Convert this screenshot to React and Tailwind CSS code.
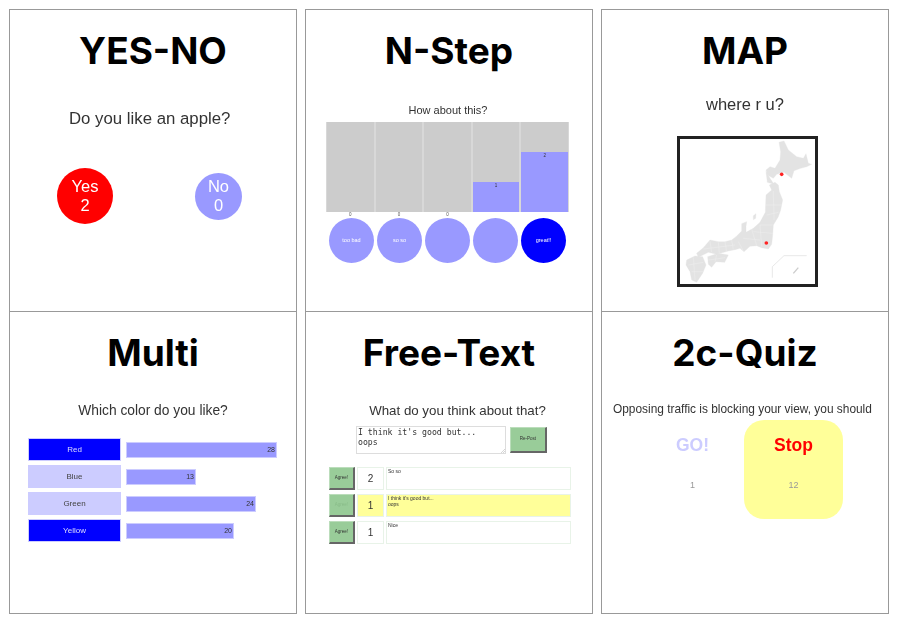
const titleFont = { fontFamily: 'Inter, "Noto Sans", sans-serif' };

function Card({ title, children }) {
  return (
    <div className="relative h-[303px] border border-[#999] flex flex-col">
      <h2 className="h-[78px] pt-[11px] text-center text-[37px] leading-[60px] font-bold text-black" style={titleFont}>{title}</h2>
      <div className="flex-1 flex flex-col text-[#333] [filter:blur(0.55px)]">{children}</div>
    </div>
  );
}

function YesNo() {
  return (
    <div className="flex flex-col">
      <p className="mt-[21px] h-[20px] pl-[59px] text-[16.8px] leading-[20px]">Do you like an apple?</p>
      <div className="mt-[39px] w-full h-[56px] flex items-center pl-[47px]">
        <div className="w-[56px] h-[56px] rounded-full bg-[#f00] text-white flex flex-col items-center justify-center text-[16.5px] leading-[19px]"><span>Yes</span><span>2</span></div>
        <div className="ml-[82px] w-[47px] h-[47px] rounded-full bg-[#99f] text-white flex flex-col items-center justify-center text-[16.5px] leading-[19px]"><span>No</span><span>0</span></div>
      </div>
    </div>
  );
}

function NStep() {
  const cols = [
    { count: 0, h: 0, label: "too bad", active: false },
    { count: 0, h: 0, label: "so so", active: false },
    { count: 0, h: 0, label: "", active: false },
    { count: 1, h: 30, label: "", active: false },
    { count: 2, h: 60, label: "great!!", active: true },
  ];
  return (
    <div className="flex flex-col">
      <p className="mt-[15px] h-[14px] text-center pr-[2px] text-[11px] leading-[14px]">How about this?</p>
      <div className="mt-[5px] ml-[20px] flex w-[243px]">
        {cols.map((c, i) => (
          <div key={i} className="flex-1 flex flex-col items-center">
            <div className="w-full h-[90px] bg-[#ccc] border-x border-[#d8d8d8] flex flex-col justify-end">
              {c.h > 0 && <div className="bg-[#99f] text-center text-[4.5px] leading-[8px] text-[#333]" style={{ height: c.h }}>{c.count}</div>}
            </div>
            <div className="h-[6px] text-[4.5px] leading-[5px] text-[#555]">{c.h === 0 ? c.count : ""}</div>
          </div>
        ))}
      </div>
      <div className="ml-[23px] flex gap-[3px]">
        {cols.map((c, i) => (
          <div key={i} className={`w-[45px] h-[45px] rounded-full flex items-center justify-center text-[5.5px] text-white ${c.active ? "bg-[#00f]" : "bg-[#99f]"}`}>{c.label}</div>
        ))}
      </div>
    </div>
  );
}

function JapanMap() {
  const land = [
    "357,52 372,48 385,75 410,95 430,100 438,86 445,115 455,118 440,125 422,130 402,137 395,160 372,142 350,148 340,160 322,150 318,135 330,125 345,130 360,105 362,80",
    "345,172 355,180 358,200 368,225 362,255 355,275 340,300 338,330 335,358 325,372 305,368 290,362 270,364 252,380 240,370 225,374 205,378 170,388 145,382 115,397 110,385 130,368 150,345 175,350 195,350 215,345 228,335 245,318 245,296 260,290 258,305 258,322 280,310 300,292 316,262 318,210 335,195 328,180",
    "143,395 175,385 205,390 194,412 168,410 155,427 145,418",
    "80,405 105,393 128,395 138,420 128,445 110,472 95,465 90,440 78,420",
    "280,272 288,266 287,280 280,284",
    "318,140 322,172 342,178 330,160",
  ];
  const lines = [
    "M318 240L365 240M320 270L355 262M340 198L342 285M300 300L338 300M280 320L338 325M275 312L290 362M250 340L300 345M300 300L305 365M235 350L250 378",
    "M150 348L155 382M175 350L178 386M195 350L200 380M215 345L220 374M130 372L225 360",
    "M85 420L130 412M100 397L105 465M95 440L130 440",
    "M170 390L165 410M145 405L195 398",
  ];
  return (
    <div className="w-[141px] h-[151px] border-[3px] border-[#222] bg-white">
      <svg viewBox="60 42 405 435" className="w-full h-full block">
        {land.map((p, i) => <polygon key={i} points={p} fill="#e3e3e3" stroke="#e3e3e3" strokeWidth="1" />)}
        {lines.map((d, i) => <path key={i} d={d} stroke="#eeeeee" strokeWidth="1.5" fill="none" />)}
        <path d="M337 458L337 425L372 392L440 392" stroke="#ddd" strokeWidth="2" fill="none" />
        <path d="M400 445L415 428" stroke="#ccc" strokeWidth="4" fill="none" />
        <circle cx="365" cy="148" r="5.5" fill="#f22" />
        <circle cx="319" cy="354" r="5.5" fill="#f22" />
      </svg>
    </div>
  );
}

function MapCard() {
  return (
    <div className="flex flex-col items-center">
      <p className="mt-[6px] h-[20px] text-[16.5px] leading-[20px]">where r u?</p>
      <div className="mt-[22px] ml-[5px]"><JapanMap /></div>
    </div>
  );
}

function Multi() {
  const rows = [
    { name: "Red", n: 28, w: 151, on: true },
    { name: "Blue", n: 13, w: 70, on: false },
    { name: "Green", n: 24, w: 130, on: false },
    { name: "Yellow", n: 20, w: 108, on: true },
  ];
  return (
    <div className="flex flex-col">
      <p className="mt-[12px] h-[18px] text-center text-[13.8px] leading-[18px]">Which color do you like?</p>
      <div className="mt-[18px] pl-[18px] flex flex-col gap-[4px]">
        {rows.map((r) => (
          <div key={r.name} className="flex items-center gap-[5px]">
            <div className={`w-[93px] h-[23px] border border-[#ccf] flex items-center justify-center text-[8px] ${r.on ? "bg-[#00f] text-[#ddf]" : "bg-[#ccf] text-[#444]"}`}>{r.name}</div>
            <div className="h-[16px] bg-[#99f] border border-[#ccf] text-right pr-[1px] text-[7px] leading-[14px] text-[#333]" style={{ width: r.w }}>{r.n}</div>
          </div>
        ))}
      </div>
    </div>
  );
}

function FreeText() {
  const rows = [
    { c: 2, text: ["So so"], mine: false },
    { c: 1, text: ["I think it's good but...", "oops"], mine: true },
    { c: 1, text: ["Nice"], mine: false },
  ];
  return (
    <div className="flex flex-col">
      <p className="mt-[12px] h-[18px] pl-[17px] text-center text-[13.3px] leading-[18px]">What do you think about that?</p>
      <div className="mt-[6px] ml-[50px] flex items-center gap-[4px]">
        <div className="relative w-[150px] h-[28px] border border-[#ddd] pl-[1px] text-[8.2px] leading-[10px] text-[#333]" style={{ fontFamily: '"DejaVu Sans Mono", monospace' }}>
          I think it's good but...<br />oops
          <svg viewBox="0 0 4 4" className="absolute right-0 bottom-0 w-[4px] h-[4px]"><path d="M0 4L4 0M2 4L4 2" stroke="#bbb" strokeWidth="0.6" /></svg>
        </div>
        <div className="w-[37px] h-[26px] bg-[#9c9] border-r-2 border-b-2 border-[#666] border-t border-l border-t-[#bdb] border-l-[#bdb] flex items-center justify-center text-[4.5px] text-[#333]">Re-Post</div>
      </div>
      <div className="mt-[13px] ml-[23px] flex flex-col gap-[4px]">
        {rows.map((r, i) => (
          <div key={i} className="flex gap-[2px] h-[23px]">
            <div className={`w-[26px] shrink-0 bg-[#9c9] border-r-2 border-b-2 border-[#666] border-t border-l border-t-[#bdb] border-l-[#bdb] flex items-center justify-center text-[4.5px] ${r.mine ? "text-[#8b8]" : "text-[#333]"}`}>Agree!</div>
            <div className={`w-[27px] shrink-0 border border-[#e8f3e8] flex items-center justify-center text-[10px] ${r.mine ? "bg-[#ff9]" : "bg-white"}`}>{r.c}</div>
            <div className={`w-[185px] border border-[#e8f3e8] px-[1px] text-[5px] leading-[5.5px] pt-[1px] ${r.mine ? "bg-[#ff9]" : "bg-white"}`}>
              {r.text.map((t, j) => <div key={j}>{t}</div>)}
            </div>
          </div>
        ))}
      </div>
    </div>
  );
}

function Quiz() {
  return (
    <div className="flex flex-col">
      <p className="mt-[11px] h-[16px] pl-[11px] text-[11.9px] leading-[16px] whitespace-nowrap">Opposing traffic is blocking your view, you should</p>
      <div className="mt-[3px] flex w-full pl-[42px] gap-[3px]">
        <div className="w-[97px] h-[99px] flex flex-col items-center pt-[13px]">
          <div className="h-[24px] text-[17.5px] leading-[24px] font-bold text-[#ccf]">GO!</div>
          <div className="mt-[21px] text-[9px] leading-[14px] text-[#999]">1</div>
        </div>
        <div className="w-[99px] h-[99px] rounded-[20px] bg-[#ff9] flex flex-col items-center pt-[13px]">
          <div className="h-[24px] text-[17.5px] leading-[24px] font-bold text-[#f00]">Stop</div>
          <div className="mt-[21px] text-[9px] leading-[14px] text-[#999]">12</div>
        </div>
      </div>
    </div>
  );
}

export default function App() {
  return (
    <div className="w-[897px] h-[626px] bg-white pt-[9px] pl-[9px] pr-[8px]" style={{ fontFamily: '"Liberation Sans", Arial, sans-serif' }}>
      <div className="grid grid-cols-[288px_288px_288px] gap-x-[8px]">
        <Card title="YES-NO"><YesNo /></Card>
        <Card title="N-Step"><NStep /></Card>
        <Card title="MAP"><MapCard /></Card>
      </div>
      <div className="-mt-[1px] grid grid-cols-[288px_288px_288px] gap-x-[8px]">
        <Card title="Multi"><Multi /></Card>
        <Card title="Free-Text"><FreeText /></Card>
        <Card title="2c-Quiz"><Quiz /></Card>
      </div>
    </div>
  );
}
